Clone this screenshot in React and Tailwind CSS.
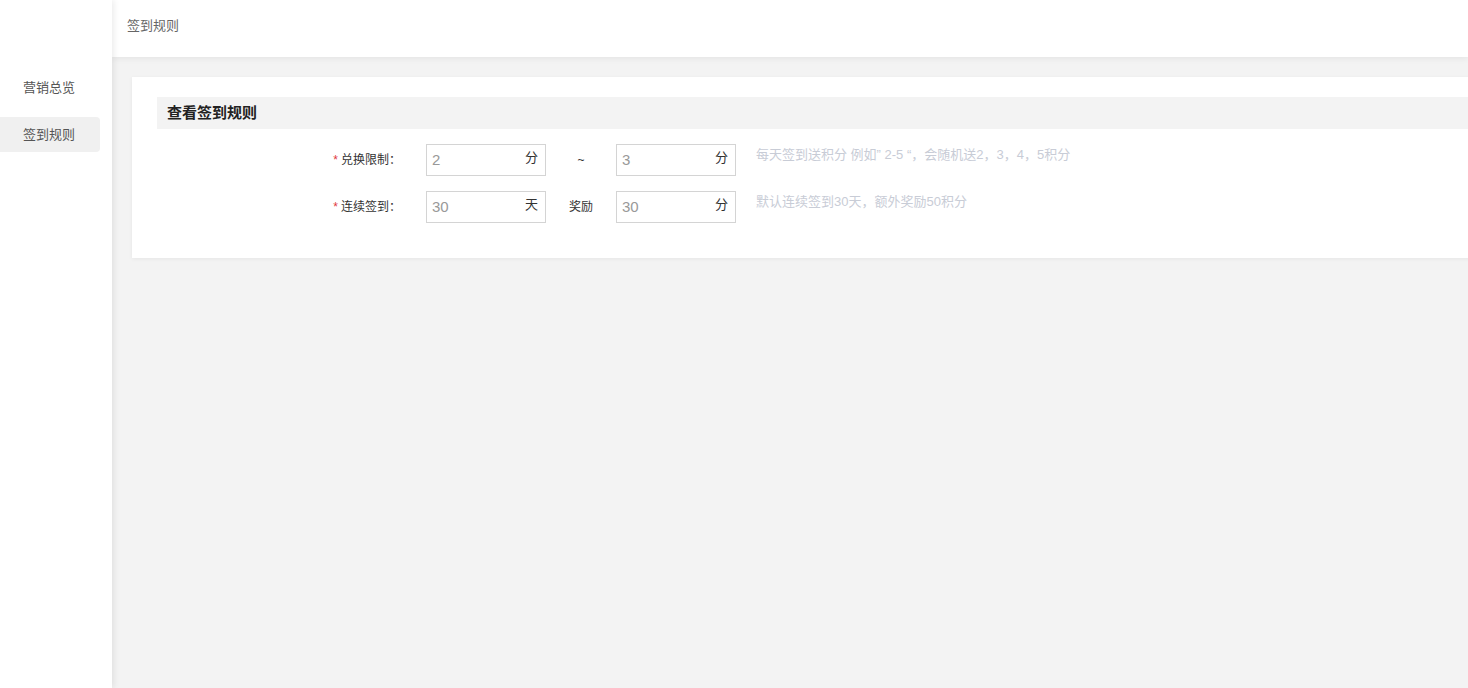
import React from "react";

const font = { fontFamily: '"Liberation Sans", "Noto Sans CJK SC", sans-serif' };

function Sidebar() {
  return (
    <aside className="w-[112px] shrink-0 bg-white shadow-[2px_0_6px_rgba(0,0,0,0.08)] z-20 pt-[70px]">
      <div className="h-[35px] flex items-center pl-[23px] text-[13px] text-[#555]">营销总览</div>
      <div className="mt-[12px] h-[35px] w-[100px] rounded-r-[4px] bg-[#f0f0f0] flex items-center pl-[23px] text-[13px] text-[#555]">
        签到规则
      </div>
    </aside>
  );
}

function UnitInput({ value, unit }) {
  return (
    <div className="w-[120px] h-[32px] border border-[#d4d4d4] bg-white flex items-center justify-between pl-[5px] pr-[7px]">
      <span className="text-[15px] text-[#999]">{value}</span>
      <span className="text-[13px] text-[#333] -mt-[4px]">{unit}</span>
    </div>
  );
}

function Row({ label, a, unitA, mid, b, hint }) {
  return (
    <div className="flex items-center">
      <div className="w-[244px] text-right text-[12px] text-[#333]">
        <span className="text-[#e0393e] mr-[3px]">*</span>
        {label}
      </div>
      <div className="ml-[25px]">
        <UnitInput value={a} unit={unitA} />
      </div>
      <div className="w-[70px] text-center text-[12px] text-[#333]">{mid}</div>
      <UnitInput value={b} unit="分" />
      <div className="ml-[20px] self-start pt-[1px] text-[13px] text-[#c8ccd6]">{hint}</div>
    </div>
  );
}

export default function App() {
  return (
    <div className="flex w-[1468px] h-[688px] overflow-hidden bg-[#f3f3f3]" style={font}>
      <Sidebar />
      <div className="flex-1 flex flex-col min-w-0">
        <header className="h-[57px] shrink-0 bg-white shadow-[0_2px_6px_rgba(0,0,0,0.06)] z-10 flex items-center pl-[15px] pb-[6px] text-[13px] text-[#666]">
          签到规则
        </header>
        <main className="pt-[20px] pl-[20px]">
          <div className="bg-white w-[1400px] shadow-[0_1px_4px_rgba(0,0,0,0.06)] pt-[20px] pl-[25px] pb-[35px]">
            <div className="h-[32px] bg-[#f3f3f3] flex items-center pl-[10px] text-[15px] font-bold text-[#222]">
              查看签到规则
            </div>
            <div className="mt-[15px] flex flex-col gap-[15px]">
              <Row label="兑换限制：" a="2" unitA="分" mid="~" b="3" hint="每天签到送积分 例如” 2-5 “，会随机送2，3，4，5积分" />
              <Row label="连续签到：" a="30" unitA="天" mid="奖励" b="30" hint="默认连续签到30天，额外奖励50积分" />
            </div>
          </div>
        </main>
      </div>
    </div>
  );
}
